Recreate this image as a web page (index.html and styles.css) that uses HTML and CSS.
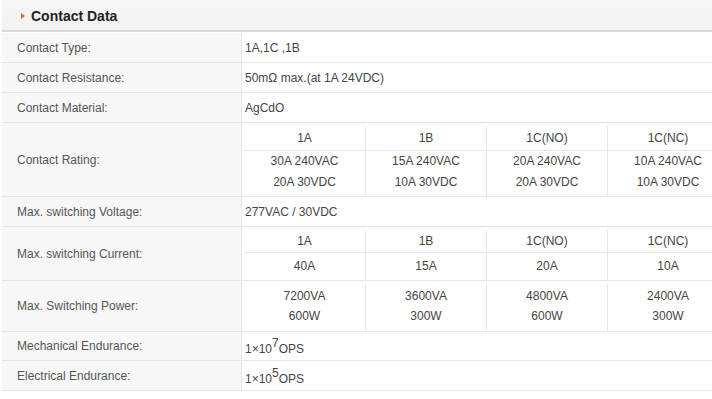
FILE: index.html
```html
<!DOCTYPE html>
<html>
<head>
<meta charset="utf-8">
<link rel="stylesheet" href="styles.css">
</head>
<body>
<div class="wrap">
  <div class="head"><span class="arrow"></span><span class="title">Contact Data</span></div>
  <div class="table">
    <div class="row r30"><div class="lab">Contact Type:</div><div class="val">1A,1C ,1B</div></div>
    <div class="row r30"><div class="lab">Contact Resistance:</div><div class="val">50mΩ max.(at 1A 24VDC)</div></div>
    <div class="row r30"><div class="lab">Contact Material:</div><div class="val">AgCdO</div></div>
    <div class="row rating"><div class="lab">Contact Rating:</div>
      <div class="val nested">
        <div class="sub">
          <div class="col"><div class="th">1A</div><div class="td two">30A 240VAC<br>20A 30VDC</div></div>
          <div class="col"><div class="th">1B</div><div class="td two">15A 240VAC<br>10A 30VDC</div></div>
          <div class="col"><div class="th">1C(NO)</div><div class="td two">20A 240VAC<br>20A 30VDC</div></div>
          <div class="col"><div class="th">1C(NC)</div><div class="td two">10A 240VAC<br>10A 30VDC</div></div>
        </div>
      </div>
    </div>
    <div class="row r30"><div class="lab">Max. switching Voltage:</div><div class="val">277VAC / 30VDC</div></div>
    <div class="row current"><div class="lab">Max. switching Current:</div>
      <div class="val nested">
        <div class="sub">
          <div class="col"><div class="th th2">1A</div><div class="td one">40A</div></div>
          <div class="col"><div class="th th2">1B</div><div class="td one">15A</div></div>
          <div class="col"><div class="th th2">1C(NO)</div><div class="td one">20A</div></div>
          <div class="col"><div class="th th2">1C(NC)</div><div class="td one">10A</div></div>
        </div>
      </div>
    </div>
    <div class="row power"><div class="lab">Max. Switching Power:</div>
      <div class="val nested">
        <div class="sub">
          <div class="col"><div class="td pw">7200VA<br>600W</div></div>
          <div class="col"><div class="td pw">3600VA<br>300W</div></div>
          <div class="col"><div class="td pw">4800VA<br>600W</div></div>
          <div class="col"><div class="td pw">2400VA<br>300W</div></div>
        </div>
      </div>
    </div>
    <div class="row r29"><div class="lab">Mechanical Endurance:</div><div class="val sup-val"><span>1×10<sup>7</sup>OPS</span></div></div>
    <div class="row r30"><div class="lab">Electrical Endurance:</div><div class="val sup-val"><span>1×10<sup>5</sup>OPS</span></div></div>
  </div>
</div>
</body>
</html>
```
FILE: styles.css
```css
html, body {
  margin: 0;
  padding: 0;
  background: #fff;
  overflow: hidden;
}
body {
  font-family: "Liberation Sans", Arial, sans-serif;
  font-size: 12px;
  color: #444;
}
.wrap {
  padding-left: 2px;
  width: 710px;
  overflow: hidden;
}
.head {
  height: 30px;
  background: linear-gradient(#f6f6f6, #f1f1f1);
  border-bottom: 2px solid #d9d9d9;
  display: flex;
  align-items: center;
  margin-bottom: 1px;
}
.arrow {
  width: 0;
  height: 0;
  border-top: 3px solid transparent;
  border-bottom: 3px solid transparent;
  border-left: 4px solid #e8641b;
  margin-left: 19px;
  margin-right: 6px;
  margin-top: 2px;
}
.title {
  font-weight: bold;
  font-size: 14px;
  color: #222;
  margin-top: 1px;
}
.table {
  width: 710px;
}
.row {
  display: flex;
  border-bottom: 1px solid #e6e6e6;
}
.r30 { height: 29px; }
.r29 { height: 28px; }
.rating { height: 73px; }
.current { height: 53px; }
.power { height: 50px; }
.lab {
  width: 224px;
  flex: none;
  padding-left: 15px;
  background: #f7f7f7;
  border-right: 1px solid #e6e6e6;
  display: flex;
  align-items: center;
  color: #555;
}
.val {
  flex: 1;
  min-width: 0;
  padding-left: 3px;
  display: flex;
  align-items: center;
  color: #444;
}
.nested {
  padding-left: 2px;
  align-items: flex-start;
  padding-top: 3px;
  overflow: hidden;
}
.sub {
  display: flex;
  flex: none;
  height: 100%;
}
.col {
  width: 121px;
  flex: none;
  box-sizing: border-box;
  border-right: 1px solid #e6e6e6;
  text-align: center;
  display: flex;
  flex-direction: column;
}
.col:first-child { width: 122px; }
.th {
  height: 24px;
  line-height: 25px;
  border-bottom: 1px solid #e6e6e6;
}
.th2 {
  height: 22px;
  line-height: 22px;
}
.two {
  line-height: 21px;
}
.one {
  line-height: 27px;
}
.pw {
  line-height: 20px;
  padding-top: 2px;
}
.sup-val {
  padding-top: 6px;
}
sup {
  font-size: 12px;
  line-height: 0;
  vertical-align: 6px;
}
```
